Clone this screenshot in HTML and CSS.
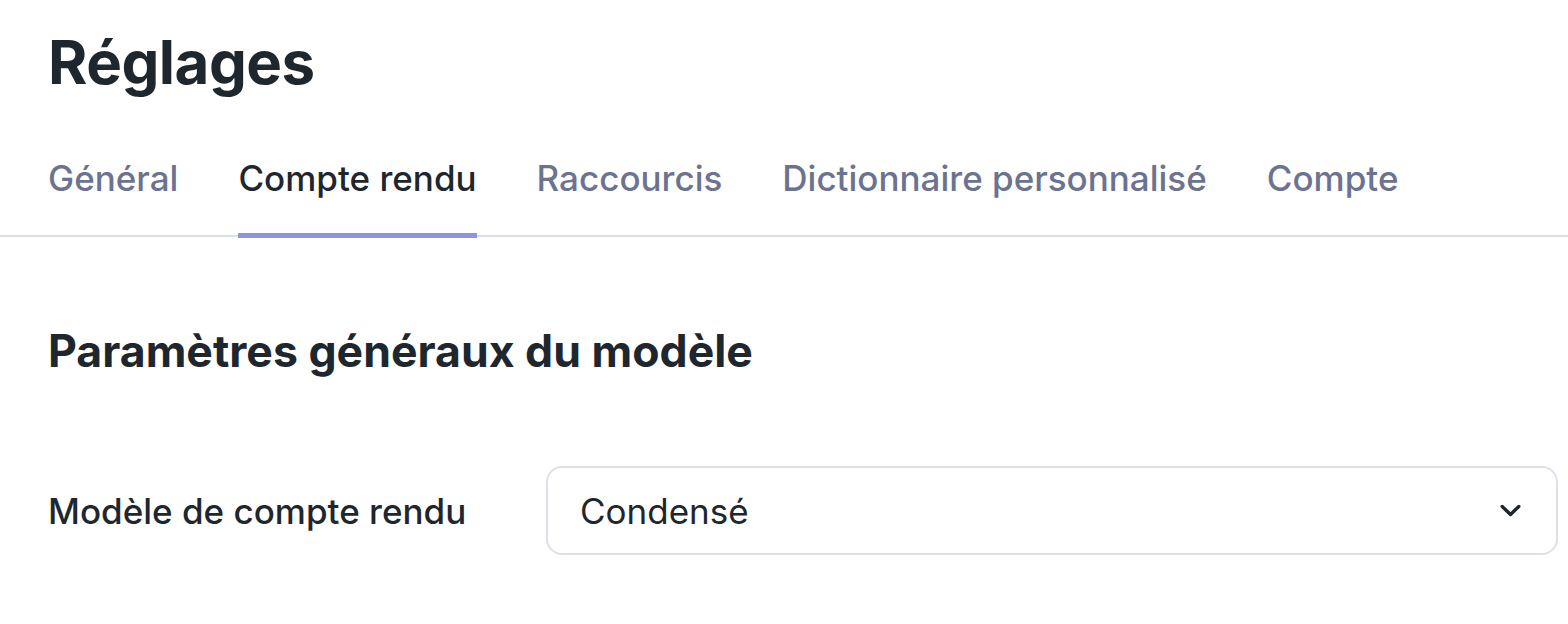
FILE: index.html
```html
<!DOCTYPE html>
<html lang="fr">

<head>
    <meta charset="utf-8">
    <title>Réglages</title>
    <link rel="stylesheet" href="styles.css">
</head>

<body>
    <h1 class="page-title">Réglages</h1>

    <nav class="tabs">
        <a class="tab">Général</a>
        <a class="tab active">Compte rendu</a>
        <a class="tab">Raccourcis</a>
        <a class="tab">Dictionnaire personnalisé</a>
        <a class="tab">Compte</a>
    </nav>

    <section class="panel">
        <h2 class="section-title">Paramètres généraux du modèle</h2>

        <div class="field">
            <label class="field-label">Modèle de compte rendu</label>
            <div class="select">
                <span class="select-value">Condensé</span>
                <svg class="chevron" width="21" height="14" viewBox="0 0 21 14">
                    <path d="M2.2 2.5l8.3 8 8.3-8" fill="none" stroke="#1f272e" stroke-width="3.4" stroke-linecap="round" stroke-linejoin="round"/>
                </svg>
            </div>
        </div>
    </section>
</body>

</html>
```

FILE: styles.css
```css
body {
    margin: 0;
    font-family: Inter, "Noto Sans", sans-serif;
    color: #1f272e;
    background: #fff;
}

.page-title {
    margin: 0;
    padding: 24px 48px 0;
    font-size: 60px;
    font-weight: 700;
    line-height: 76px;
    letter-spacing: -0.5px;
}

.tabs {
    display: flex;
    gap: 60px;
    padding: 0 48px;
    margin-top: 56px;
    border-bottom: 2px solid #dde0ea;
}

.tab {
    display: block;
    padding-bottom: 33px;
    font-size: 35px;
    line-height: 44px;
    font-weight: 500;
    color: #6b7390;
    border-bottom: 5px solid transparent;
    margin-bottom: -3px;
}

.tab.active {
    color: #1f272e;
    border-bottom-color: #8d95e3;
}

.panel {
    padding: 0 10px 0 48px;
}

.section-title {
    margin: 86px 0 0;
    font-size: 44.6px;
    line-height: 56px;
    font-weight: 700;
}

.field {
    display: flex;
    align-items: center;
    margin-top: 87px;
}

.field-label {
    width: 498px;
    font-size: 35px;
    font-weight: 500;
}

.select {
    flex: 1;
    display: flex;
    align-items: center;
    justify-content: space-between;
    height: 85px;
    padding: 0 35px 0 32px;
    border: 2px solid #dde0ea;
    border-radius: 16px;
}

.select-value {
    font-size: 35px;
}
```
